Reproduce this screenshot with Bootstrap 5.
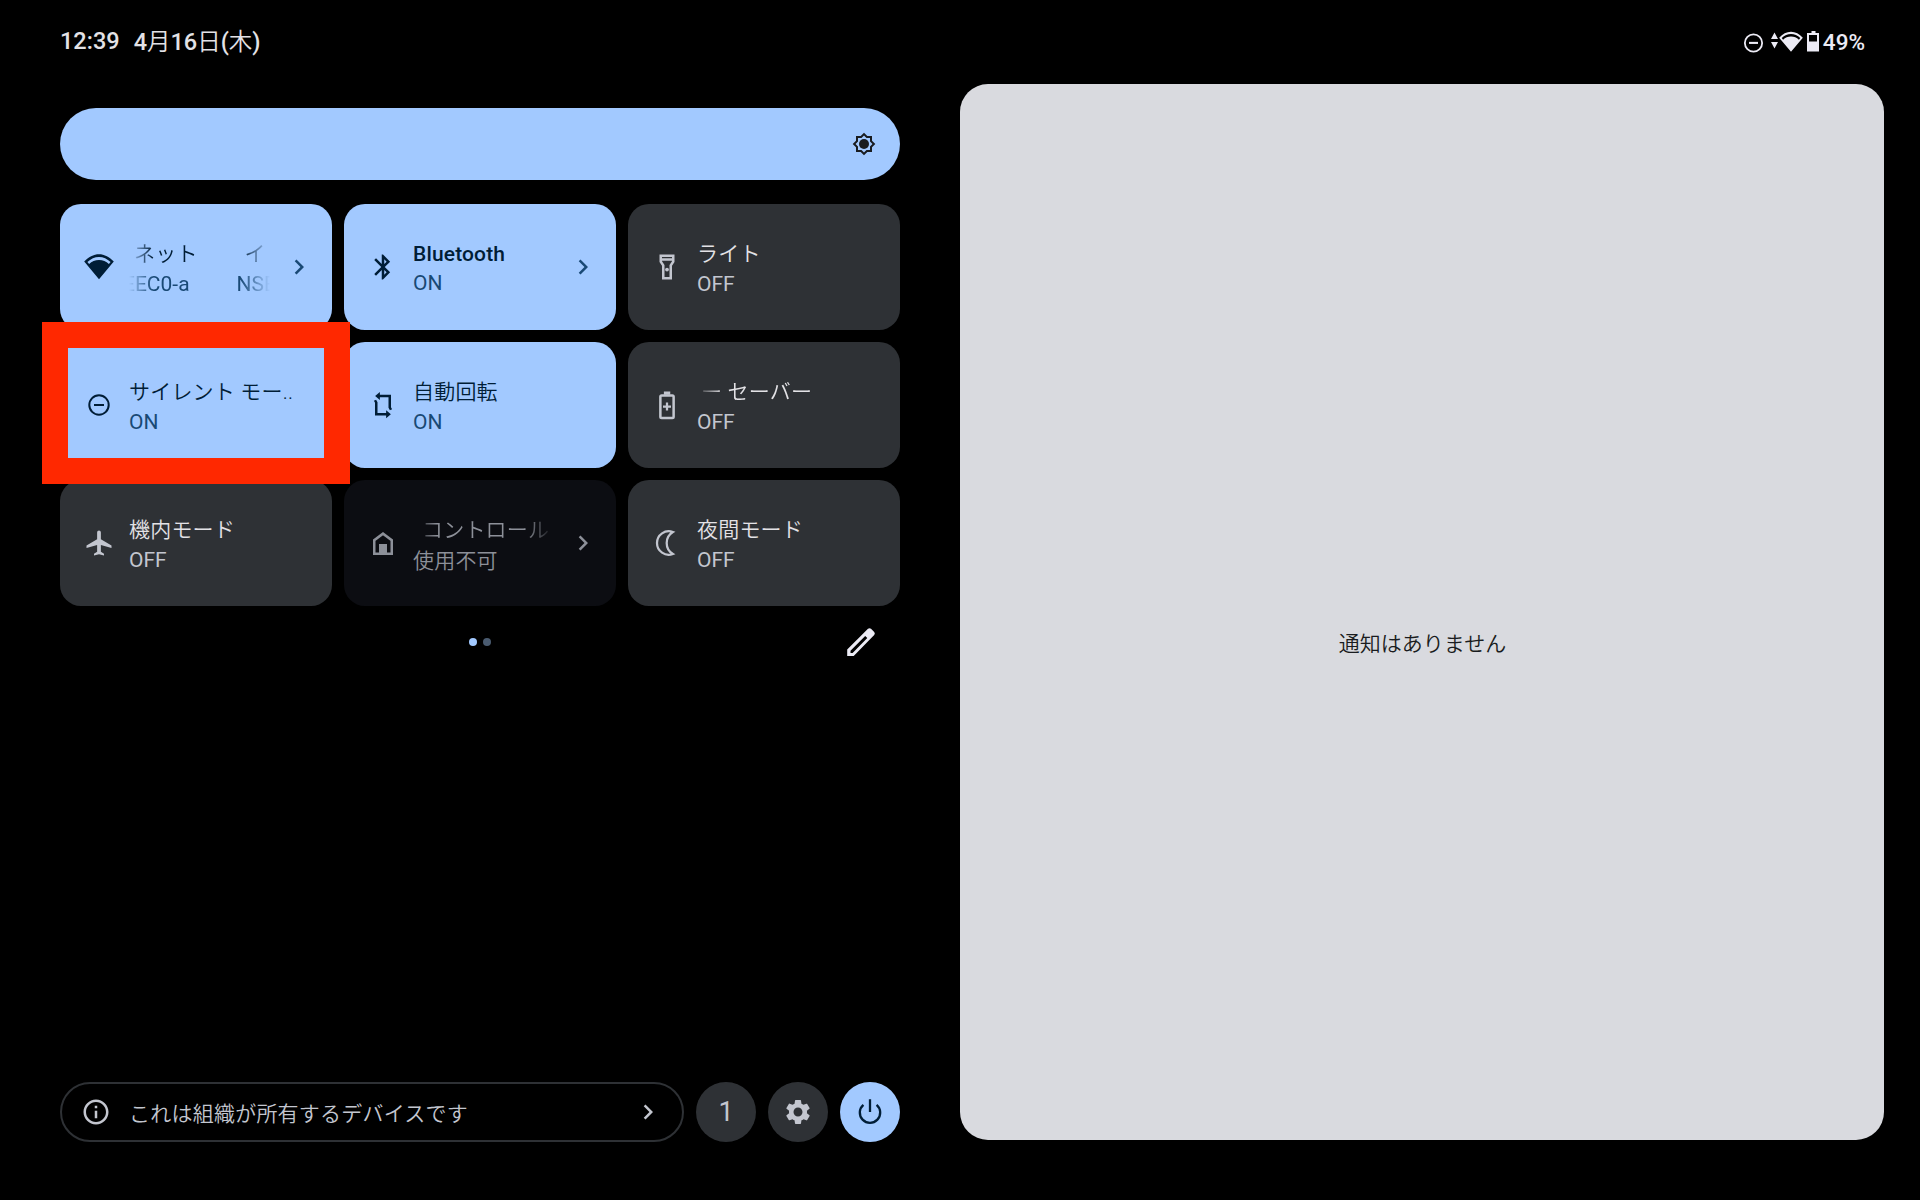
<!DOCTYPE html>
<html lang="ja">
<head>
<meta charset="utf-8">
<title>クイック設定</title>
<link href="https://cdn.jsdelivr.net/npm/bootstrap@5.3.0/dist/css/bootstrap.min.css" rel="stylesheet">
<style>
body{width:1920px;height:1200px;overflow:hidden;background:#000;color:#e3e2e6;font-family:Roboto,"Noto Sans CJK JP",sans-serif;font-size:21px}
svg{display:block;flex:none;fill:currentColor}
.topbar{height:84px;padding:0 55px 0 60px}
.clock{font-size:23.5px;font-weight:500;line-height:30px;padding-top:26px}
.clock .day{font-weight:350;margin-left:14px;padding-top:1px}
.clock .day b{font-weight:500}
.status{color:#ecebf5;padding-top:25px;height:59px}
.pct{font-size:22.5px;font-weight:500;line-height:30px}
.panel{width:840px;margin-left:60px;padding-top:24px;height:1058px}
.bright{height:72px;border-radius:36px;background:#a2c9ff;color:#191c20;padding-right:24px}
.tiles{display:grid;grid-template-columns:repeat(3,272px);grid-auto-rows:126px;gap:12px;margin-top:24px}
.tile{border-radius:21px;padding:0 18px 0 24px;background:#2e3135;color:#c3c6cf}
.tile.on{background:#a2c9ff;color:#001d36}
.tile.off-na{background:#0c0d12;color:#8d9099}
.lbl{margin-left:15px;flex:1;min-width:0;height:56px;white-space:nowrap}
.lbl div{line-height:30px;height:30px}
.ttl{color:#e3e2e6;font-weight:350;letter-spacing:.2px}
.lbl.latin{height:58px}
.latin .ttl{font-weight:500;letter-spacing:.15px;padding-top:1px}
.on .ttl{color:#001d36}
.on .sub,.on .chev{color:#194975}
.off-na .ttl{color:#8d9099}
.off-na .sub{padding-top:1px;font-weight:350;letter-spacing:.2px}
.fade-both{-webkit-mask-image:linear-gradient(90deg,transparent 0,#000 24px,#000 calc(100% - 30px),transparent);mask-image:linear-gradient(90deg,transparent 0,#000 24px,#000 calc(100% - 30px),transparent)}
.fade-start{-webkit-mask-image:linear-gradient(90deg,transparent 0,#000 26px);mask-image:linear-gradient(90deg,transparent 0,#000 26px)}
.marquee{width:141px;overflow:hidden}
.focusbox{position:absolute;left:-18px;top:118px;width:308px;height:162px;border:26px solid #ff2800}
.pager{height:72px;padding-right:23px;color:#ecebf5}
.pager .dots{gap:6px;margin-left:409px}
.pager i{width:8px;height:8px;border-radius:50%;background:#a2c9ff}
.pager i+i{background:#4a5b70}
.foot{gap:12px}
.owned{width:624px;height:60px;border:2px solid #2e3135;border-radius:30px;padding:0 19px 0 19px;color:#c3c6cf}
.owned .msg{margin-left:18px;line-height:30px;padding-top:3px;font-weight:350;letter-spacing:.23px}
.rnd{width:60px;height:60px;border-radius:50%;background:#2e3135;color:#c3c6cf;font-size:27px}
.rnd.pw{background:#a2c9ff;color:#001d36}
.shade{width:924px;height:1056px;margin-left:60px;border-radius:28px;background:#d9dadf;color:#191c20}
.shade span{padding:65px 0 0 1px;font-weight:350}
</style>
</head>
<body>
<svg width="0" height="0" class="position-absolute">
<symbol id="wifi" viewBox="0 0 30 30"><path fill-rule="evenodd" d="M15 27.2L.2 9.6C4.5 5 9.5 2.2 15 2.2s10.5 2.8 14.8 7.4zM3.4 10.1l1.7 2C7.8 9.4 11.2 8 15 8s7.200 1.400 9.900 4.100l1.700-2C23.200 6.700 19.300 4.900 15 4.900S6.800 6.700 3.400 10.100z"/></symbol>
<symbol id="dnd" viewBox="0 0 30 30"><circle cx="15" cy="15" r="9.700" fill="none" stroke="currentColor" stroke-width="2"/><path d="M10 14h10v2H10z"/></symbol>
<symbol id="chev" viewBox="0 0 24 24"><path d="M10 6L8.590 7.410 13.170 12l-4.580 4.590L10 18l6-6z"/></symbol>
</svg>

<header class="topbar d-flex justify-content-between">
  <div class="clock d-flex"><span>12:39</span><span class="day"><b>4</b>月<b>16</b>日<b>(</b>木<b>)</b></span></div>
  <div class="status d-flex align-items-center">
    <svg width="27" height="27" class="me-1" viewBox="0 0 30 30"><circle cx="15" cy="15.500" r="9.600" fill="none" stroke="currentColor" stroke-width="2"/><path d="M10 14.300h10v2.300H10z"/></svg>
    <svg width="7" height="30" viewBox="0 0 7 30"><path d="M3.500 5.500L7 12H0zM0 15h7l-3.500 6.500z"/></svg>
    <svg width="24" height="24" style="margin-left:1px" viewBox="0 0 30 30"><use href="#wifi"/></svg>
    <svg width="20" height="30" viewBox="0 0 20 30"><path fill-rule="evenodd" d="M8.500 4h4v2h3.500v18.500H4V6h4.500zM6 8v6.500h8V8z"/></svg>
    <span class="pct">49%</span>
  </div>
</header>

<main class="d-flex">
  <section class="panel d-flex flex-column">
    <div class="bright d-flex align-items-center justify-content-end">
      <svg width="24" height="24" viewBox="0 0 24 24"><path fill-rule="evenodd" d="M20 8.690V4h-4.690L12 .69 8.690 4H4v4.690L.69 12 4 15.310V20h4.690L12 23.310 15.310 20H20v-4.690L23.310 12 20 8.690zm-2 5.790V18h-3.520L12 20.480 9.520 18H6v-3.520L3.520 12 6 9.520V6h3.520L12 3.520 14.480 6H18v3.520L20.480 12 18 14.480z"/><circle cx="12" cy="12" r="5"/></svg>
    </div>

    <div class="tiles position-relative">
      <div class="tile on d-flex align-items-center">
        <svg width="30" height="30"><use href="#wifi"/></svg>
        <div class="lbl"><div class="marquee fade-both d-flex ttl"><span style="margin-left:5px">ネット</span><span style="margin-left:47px">イ</span></div>
        <div class="marquee fade-both d-flex sub"><span style="margin-left:-6px">EEC0-a</span><span style="margin-left:47px">NSE</span></div></div>
        <svg class="chev" width="30" height="30"><use href="#chev"/></svg>
      </div>
      <div class="tile on d-flex align-items-center">
        <svg width="30" height="30" viewBox="0 0 24 24"><path fill-rule="evenodd" d="M17.710 7.710L12 2h-1v7.590L6.410 5 5 6.410 10.590 12 5 17.590 6.410 19 11 14.410V22h1l5.710-5.710L13.410 12l4.300-4.290zM13 5.830l1.880 1.880L13 9.590V5.830zm1.880 10.460L13 18.170v-3.760l1.880 1.880z"/></svg>
        <div class="lbl latin"><div class="ttl">Bluetooth</div><div class="sub">ON</div></div>
        <svg class="chev" width="30" height="30"><use href="#chev"/></svg>
      </div>
      <div class="tile d-flex align-items-center">
        <svg width="30" height="30" viewBox="0 0 24 24"><path fill-rule="evenodd" d="M6 2v6l2 3v11h8V11l2-3V2H6zm10 2v1H8V4h8zm-2 6.400V20h-4v-9.600L8 7.400V7h8v.39l-2 3.010z"/><circle cx="12" cy="14" r="1.500"/></svg>
        <div class="lbl"><div class="ttl">ライト</div><div class="sub">OFF</div></div>
      </div>

      <div class="tile on d-flex align-items-center">
        <svg width="30" height="30"><use href="#dnd"/></svg>
        <div class="lbl"><div class="ttl">サイレント モー..</div><div class="sub">ON</div></div>
      </div>
      <div class="tile on d-flex align-items-center">
        <svg width="30" height="30" viewBox="0 0 24 24"><path d="M8.500 4.700h8.900V14l1 1.800M15.500 19.300H6.600V10l-1-1.800" fill="none" stroke="currentColor" stroke-width="2"/><path d="M9.500 1.500v6.400L5.700 4.700zM14.500 16.100v6.400l3.800-3.200z"/></svg>
        <div class="lbl"><div class="ttl">自動回転</div><div class="sub">ON</div></div>
      </div>
      <div class="tile d-flex align-items-center">
        <svg width="30" height="30" viewBox="0 0 24 24"><rect x="6.700" y="4.300" width="10.600" height="18" rx="1" fill="none" stroke="currentColor" stroke-width="2"/><path d="M9.500 1.200h5.100v2.600H9.500zM11.100 10h1.800v2.300h2.300v1.800h-2.300v2.300h-1.800v-2.300H8.800v-1.800h2.300z"/></svg>
        <div class="lbl"><div class="ttl fade-start"><span style="margin-left:4px">ー セーバー</span></div><div class="sub">OFF</div></div>
      </div>

      <div class="tile d-flex align-items-center">
        <svg width="30" height="30" viewBox="0 0 24 24"><path d="M22 16v-2l-8.500-5V3.500C13.500 2.670 12.830 2 12 2s-1.500.67-1.500 1.500V9L2 14v2l8.500-2.500V19L8 20.500V22l4-1 4 1v-1.500L13.500 19v-5.500L22 16z"/></svg>
        <div class="lbl"><div class="ttl">機内モード</div><div class="sub">OFF</div></div>
      </div>
      <div class="tile off-na d-flex align-items-center">
        <svg width="30" height="30" viewBox="0 0 24 24"><path d="M5 20.500V9.700l7-5.200 7 5.200v10.800z" fill="none" stroke="currentColor" stroke-width="2"/><path d="M8.800 12.800h6.400v8H8.800z"/></svg>
        <div class="lbl"><div class="marquee fade-both ttl"><span style="margin-left:9px">コントロール</span></div><div class="sub">使用不可</div></div>
        <svg class="chev" width="30" height="30"><use href="#chev"/></svg>
      </div>
      <div class="tile d-flex align-items-center">
        <svg width="30" height="30" viewBox="0 0 24 24"><path d="M16.700 3.200A9.400 9.400 0 1 0 16.700 20.800A10.300 10.300 0 0 1 16.700 3.200z" fill="none" stroke="currentColor" stroke-width="1.800"/></svg>
        <div class="lbl"><div class="ttl">夜間モード</div><div class="sub">OFF</div></div>
      </div>
      <div class="focusbox"></div>
    </div>

    <div class="pager d-flex align-items-center justify-content-between">
      <div class="dots d-flex"><i></i><i></i></div>
      <svg width="32" height="32" viewBox="0 0 32 32"><path fill-rule="evenodd" d="M2.200 30v-6.500L23 2.800q1.500-1.300 3 0l3.200 3.200q1.300 1.500 0 3L8.700 30zM5.500 24.800v2.100h2.100L22.300 12.100l-2.100-2.100z"/></svg>
    </div>

    <div class="foot d-flex mt-auto">
      <div class="owned d-flex align-items-center">
        <svg width="30" height="30" viewBox="0 0 24 24"><path d="M11 7h2v2h-2V7zm0 4h2v6h-2v-6zm1-9C6.480 2 2 6.480 2 12s4.480 10 10 10 10-4.480 10-10S17.520 2 12 2zm0 18c-4.410 0-8-3.590-8-8s3.590-8 8-8 8 3.590 8 8-3.590 8-8 8z"/></svg>
        <span class="msg me-auto">これは組織が所有するデバイスです</span>
        <svg width="30" height="30"><use href="#chev"/></svg>
      </div>
      <div class="rnd d-flex align-items-center justify-content-center">1</div>
      <div class="rnd d-flex align-items-center justify-content-center"><svg width="30" height="30" viewBox="0 0 24 24"><path d="M19.140 12.940c.04-.3.060-.61.060-.94 0-.32-.02-.64-.07-.94l2.030-1.580c.18-.14.230-.41.120-.61l-1.920-3.320c-.12-.22-.37-.29-.59-.22l-2.390.96c-.5-.38-1.030-.7-1.620-.94l-.36-2.540c-.04-.24-.24-.41-.48-.41h-3.840c-.24 0-.43.17-.47.41l-.36 2.540c-.59.24-1.130.57-1.620.94l-2.390-.96c-.22-.08-.47 0-.59.22L2.740 8.870c-.12.21-.08.47.12.61l2.030 1.580c-.05.3-.09.63-.09.94s.02.64.07.94l-2.030 1.580c-.18.14-.23.41-.12.610l1.920 3.320c.12.220.37.290.59.220l2.390-.96c.5.380 1.030.7 1.620.94l.36 2.540c.05.240.24.410.48.410h3.840c.24 0 .44-.17.470-.41l.36-2.540c.59-.24 1.130-.56 1.620-.94l2.390.96c.22.080.47 0 .59-.22l1.920-3.320c.12-.22.070-.47-.12-.61l-2.010-1.580zM12 15.600c-1.980 0-3.600-1.620-3.600-3.600s1.620-3.600 3.600-3.600 3.600 1.620 3.600 3.600-1.620 3.600-3.600 3.600z"/></svg></div>
      <div class="rnd pw d-flex align-items-center justify-content-center"><svg width="30" height="30" viewBox="0 0 30 30"><path d="M15 2.200V15M8.400 7.800A10.200 10.200 0 1 0 21.600 7.800" fill="none" stroke="currentColor" stroke-width="2.300"/></svg></div>
    </div>
  </section>

  <section class="shade d-flex align-items-center justify-content-center"><span>通知はありません</span></section>
</main>
<script src="https://cdn.jsdelivr.net/npm/bootstrap@5.3.0/dist/js/bootstrap.bundle.min.js"></script>
</body>
</html>
